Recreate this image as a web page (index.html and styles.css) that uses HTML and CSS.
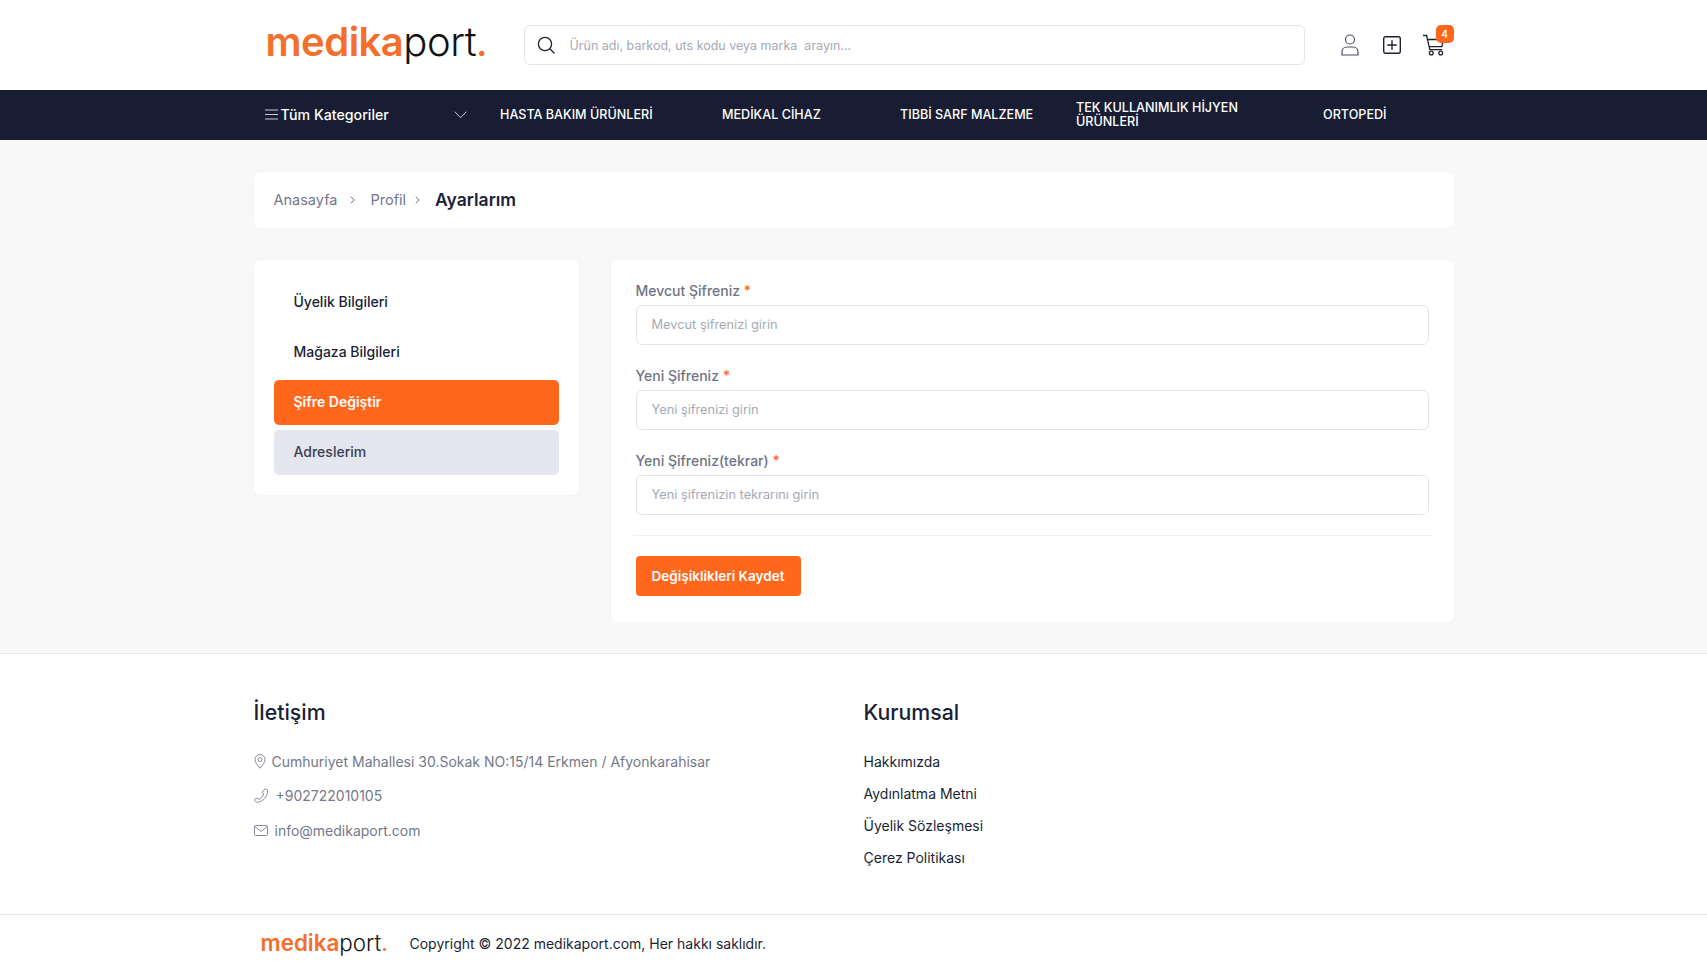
FILE: index.html
```html
<!DOCTYPE html>
<html lang="tr">
<head>
  <meta charset="UTF-8">
  <title>Ayarlarım - medikaport</title>
  <link rel="stylesheet" href="styles.css">
</head>
<body>
  <header class="top">
    <div class="wrap top-row">
      <a class="logo"><b>medika</b>port<b class="dot">.</b></a>
      <div class="search">
        <svg width="20" height="20" viewBox="0 0 20 20" fill="none" stroke="#1e2233" stroke-width="1.3"><circle cx="9" cy="9" r="6.6"/><path d="M14 14l4.5 4.5"/></svg>
        <span>Ürün adı, barkod, uts kodu veya marka&nbsp; arayın...</span>
      </div>
      <div class="top-icons">
        <svg width="22" height="24" viewBox="0 0 22 24" fill="none" stroke="#4a4f62" stroke-width="1.2"><circle cx="11" cy="6.500" r="4.500"/><path d="M3 22v-3c0-3 2.200-5 5-5h6c2.800 0 5 2 5 5v3z"/></svg>
        <svg width="20" height="20" viewBox="0 0 20 20" fill="none" stroke="#1e2233" stroke-width="1.4"><rect x="1.700" y="1.700" width="16.600" height="16.600" rx="2"/><path d="M10 5.200v9.600M5.200 10h9.600"/></svg>
        <div class="cart">
          <svg width="24" height="24" viewBox="0 0 24 24" fill="none" stroke="#1e2233" stroke-width="1.3"><path d="M1 2.500h3.600l3.200 14.200h12.400"/><path d="M5.500 6.500h16l-1.600 7.200H7.200"/><circle cx="9.300" cy="20" r="1.900"/><circle cx="18.700" cy="20" r="1.900"/></svg>
          <span class="badge">4</span>
        </div>
      </div>
    </div>
  </header>

  <nav class="nav">
    <div class="wrap nav-row">
      <a class="all">
        <svg width="13" height="11" viewBox="0 0 13 11" fill="none" stroke="#c9ccd6" stroke-width="1"><path d="M0 1h13M0 5.500h13M0 10h13"/></svg>
        Tüm Kategoriler
        <svg class="chev" width="13" height="8" viewBox="0 0 13 8" fill="none" stroke="#c9ccd6" stroke-width="1"><path d="M.7.7l5.800 6 5.800-6"/></svg>
      </a>
      <a>HASTA BAKIM ÜRÜNLERİ</a>
      <a>MEDİKAL CİHAZ</a>
      <a>TIBBİ SARF MALZEME</a>
      <a class="two">TEK KULLANIMLIK HİJYEN ÜRÜNLERİ</a>
      <a>ORTOPEDİ</a>
    </div>
  </nav>

  <main class="page">
    <div class="wrap">
      <div class="crumbs">
        <a>Anasayfa</a>
        <svg width="5" height="8" viewBox="0 0 5 8" fill="none" stroke="#74788b" stroke-width="1"><path d="M.7.7L4.200 4 .7 7.300"/></svg>
        <a>Profil</a>
        <svg class="tight" width="5" height="8" viewBox="0 0 5 8" fill="none" stroke="#74788b" stroke-width="1"><path d="M.7.7L4.200 4 .7 7.300"/></svg>
        <strong>Ayarlarım</strong>
      </div>
      <div class="columns">
        <aside class="card side">
          <a>Üyelik Bilgileri</a>
          <a>Mağaza Bilgileri</a>
          <a class="on">Şifre Değiştir</a>
          <a class="soft">Adreslerim</a>
        </aside>
        <form class="card pass">
          <label>Mevcut Şifreniz <em>*</em></label>
          <input type="password" placeholder="Mevcut şifrenizi girin">
          <label>Yeni Şifreniz <em>*</em></label>
          <input type="password" placeholder="Yeni şifrenizi girin">
          <label>Yeni Şifreniz(tekrar) <em>*</em></label>
          <input type="password" placeholder="Yeni şifrenizin tekrarını girin">
          <hr>
          <button type="button">Değişiklikleri Kaydet</button>
        </form>
      </div>
    </div>
  </main>

  <footer class="foot">
    <div class="wrap foot-cols">
      <div>
        <h3>İletişim</h3>
        <p class="line first">
          <svg width="12" height="15" viewBox="0 0 12 15" fill="none" stroke="#858999" stroke-width="1"><path d="M6 14.200C3 10.600 1 8.200 1 5.600a5 5 0 0 1 10 0c0 2.600-2 5-5 8.600z"/><circle cx="6" cy="5.600" r="2"/></svg>
          Cumhuriyet Mahallesi 30.Sokak NO:15/14 Erkmen / Afyonkarahisar
        </p>
        <p class="line">
          <svg class="ic" width="15" height="15" viewBox="0 0 15 15" fill="none" stroke="#858999" stroke-width="1"><path d="M11 .8c2 .4 3 1.600 2.700 3.500-.8 4.400-4.600 8.700-9.200 9.800-1.800.4-3.500-.4-3.900-1.900-.1-.6.200-1 .7-1.200l1.800-.7c.5-.2.900 0 1.200.4l.5.8c2.200-1 4.300-3.400 5-5.800l-.9-.4c-.5-.2-.7-.6-.6-1.100z"/></svg>
          +902722010105
        </p>
        <p class="line">
          <svg class="ic" width="14" height="11" viewBox="0 0 14 11" fill="none" stroke="#858999" stroke-width="1"><rect x=".5" y=".5" width="13" height="10" rx="1"/><path d="M.8 1.500L7 6.500l6.200-5"/></svg>
          info@medikaport.com
        </p>
      </div>
      <div>
        <h3>Kurumsal</h3>
        <ul>
          <li>Hakkımızda</li>
          <li>Aydınlatma Metni</li>
          <li>Üyelik Sözleşmesi</li>
          <li>Çerez Politikası</li>
        </ul>
      </div>
    </div>
    <div class="copy">
      <div class="wrap copy-row">
        <a class="logo small"><b>medika</b>port<b class="dot">.</b></a>
        <span>Copyright © 2022 medikaport.com, Her hakkı saklıdır.</span>
      </div>
    </div>
  </footer>
</body>
</html>
```

FILE: styles.css
```css
* {
  box-sizing: border-box;
}
body {
  margin: 0;
  font-family: Inter, "Open Sans", sans-serif;
  font-size: 14px;
  color: #1a1f36;
  background: #fff;
}
.wrap {
  width: 1200px;
  margin: 0 auto;
}
.top {
  height: 90px;
}
.top-row {
  display: flex;
  align-items: center;
  height: 100%;
}
.logo {
  width: 258px;
  margin-left: 12px;
  padding-bottom: 7px;
  font-size: 40px;
  font-weight: 300;
  color: #111;
  letter-spacing: -0.5px;
}
.logo b {
  font-weight: 600;
  color: #f36f2b;
}
.logo .dot {
  font-weight: 400;
}
.search {
  display: flex;
  align-items: center;
  gap: 14px;
  width: 781px;
  height: 40px;
  padding: 0 11px;
  border: 1px solid #e4e5ea;
  border-radius: 6px;
  color: #a6a9b7;
  font-size: 12.5px;
}
.top-icons {
  display: flex;
  align-items: center;
  gap: 21px;
  margin-left: 34px;
  padding-bottom: 1px;
}
.cart {
  position: relative;
  margin-left: -1px;
}
.cart svg {
  display: block;
}
.badge {
  position: absolute;
  top: -8px;
  left: 14px;
  width: 18px;
  height: 18px;
  border-radius: 5px;
  background: #ff671d;
  color: #fff;
  font-size: 10px;
  font-weight: 600;
  line-height: 18px;
  text-align: center;
}
.nav {
  height: 50px;
  background: #181d33;
}
.nav-row {
  display: grid;
  grid-template-columns: 246.500px 222px 178px 176px 247px 1fr;
  align-items: center;
  height: 100%;
  color: #fff;
  font-weight: 500;
  font-size: 12.6px;
  line-height: 14px;
}
.all {
  display: flex;
  align-items: center;
  gap: 3px;
  padding: 0 0 1px 11px;
  font-size: 14.2px;
}
.all .chev {
  margin-left: auto;
  margin-right: 33px;
}
.two {
  width: 170px;
}
.page {
  height: 514px;
  padding-top: 32px;
  background: #f8f8f9;
  border-bottom: 1px solid #e6e7eb;
}
.crumbs {
  display: flex;
  align-items: center;
  height: 56px;
  padding: 0 20px 1px;
  background: #fff;
  border-radius: 6px;
  box-shadow: 0 0 4px rgba(20, 25, 50, 0.03);
  color: #74788b;
  font-size: 14.5px;
}
.crumbs svg {
  margin: 0 15px 0 13px;
}
.crumbs .tight {
  margin-left: 9px;
}
.crumbs strong {
  font-size: 17.5px;
  font-weight: 600;
  color: #1a1f36;
}
.columns {
  display: flex;
  align-items: flex-start;
  gap: 32px;
  margin-top: 32px;
}
.card {
  background: #fff;
  border-radius: 6px;
  box-shadow: 0 0 4px rgba(20, 25, 50, 0.03);
}
.side {
  display: flex;
  flex-direction: column;
  gap: 5px;
  width: 325px;
  padding: 20px;
}
.side a {
  height: 45px;
  padding: 0 20px 1px;
  border-radius: 5px;
  font-weight: 500;
  line-height: 44px;
}
.side .on {
  background: #ff671d;
  color: #fff;
  font-weight: 600;
}
.side .soft {
  background: #e5e6ef;
  color: #3a3f52;
}
.pass {
  display: flex;
  flex-direction: column;
  align-items: flex-start;
  width: 843px;
  height: 362px;
  padding: 21px 25px 0;
}
.pass label {
  height: 20px;
  margin-bottom: 4px;
  font-weight: 500;
  line-height: 20px;
  color: #6f7385;
}
.pass em {
  font-style: normal;
  color: #ff671d;
}
.pass input {
  width: 100%;
  height: 40px;
  margin-bottom: 21px;
  padding: 0 15px 2px;
  border: 1px solid #e4e5ea;
  border-radius: 6px;
  font: inherit;
  font-size: 12.8px;
}
.pass input::placeholder {
  color: #a6a9b7;
}
.pass hr {
  align-self: stretch;
  height: 1px;
  margin: -1px -3px 20px;
  border: 0;
  background: #f1f1f4;
}
.pass button {
  width: 165px;
  height: 40px;
  padding-bottom: 2px;
  border: 0;
  border-radius: 4px;
  background: #ff671d;
  color: #fff;
  font: inherit;
  font-size: 13.5px;
  font-weight: 600;
}
.foot-cols {
  display: grid;
  grid-template-columns: 610px 1fr;
  height: 260px;
  padding-top: 44px;
}
.foot h3 {
  margin: 0 0 25px;
  font-size: 21.3px;
  font-weight: 500;
  line-height: 28px;
}
.line {
  display: flex;
  align-items: center;
  gap: 6px;
  height: 20px;
  margin: 0 0 14.500px;
  color: #74788b;
}
.line .ic {
  margin-right: 1px;
}
.foot ul {
  margin: 0;
  padding: 1px 0 0;
  list-style: none;
}
.foot li {
  height: 20px;
  margin-bottom: 12px;
  line-height: 20px;
}
.copy {
  height: 61px;
  border-top: 1px solid #e6e7eb;
}
.copy-row {
  display: flex;
  align-items: center;
  height: 100%;
  padding-bottom: 3px;
}
.logo.small {
  width: 149px;
  margin-left: 7px;
  padding-bottom: 2px;
  font-size: 22.4px;
  letter-spacing: 0;
}
```
